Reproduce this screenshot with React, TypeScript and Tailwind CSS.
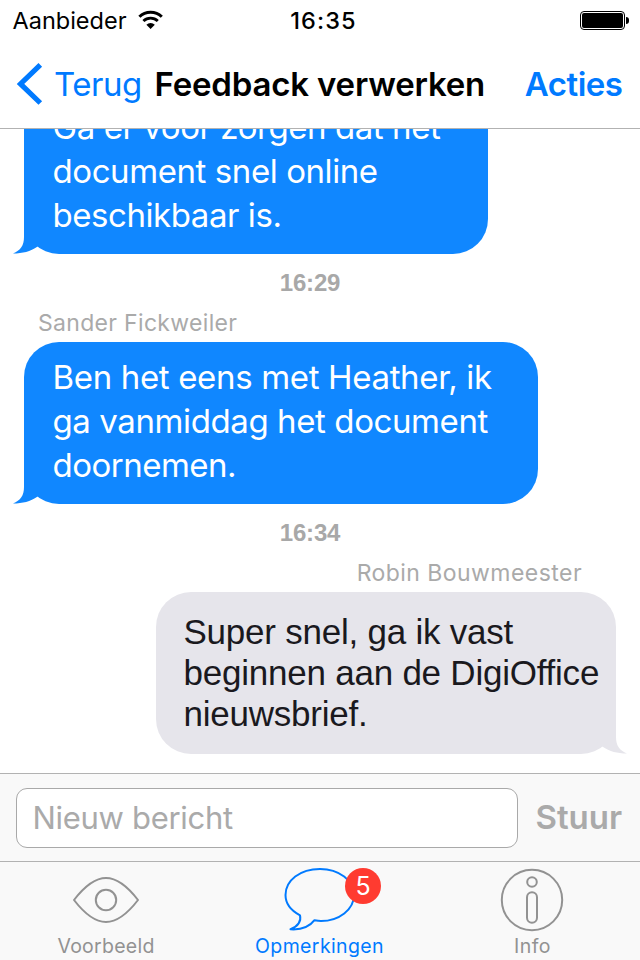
import React from "react";

function StatusBar() {
  return (
    <div className="grid h-10 grid-cols-[1fr_auto_1fr] items-center text-[23.5px] leading-[42px]">
      <div className="flex items-center pl-[12.5px]">
        <span>Aanbieder</span>
        <svg className="mb-[2px] ml-[11px]" width="26" height="20" viewBox="0 0 26 20" fill="none">
          <path d="M1.4 6.8A16 16 0 0 1 23.8 6.8" stroke="#000" strokeWidth="3" />
          <path d="M5.4 11A10.3 10.3 0 0 1 19.8 11" stroke="#000" strokeWidth="2.8" />
          <path d="M8.4 14.8A5.8 5.8 0 0 1 16.8 14.8L12.6 18.9Z" fill="#000" />
        </svg>
      </div>
      <span className="pl-[7px] font-medium tracking-[1.1px]">16:35</span>
      <div className="mb-[2px] flex items-center justify-end gap-px pr-[11px]">
        <div className="h-[19px] w-[45px] rounded-[4px] border border-black p-px">
          <div className="h-full w-full rounded-[2px] bg-black" />
        </div>
        <div className="h-[7px] w-[3px] rounded-r-full bg-black" />
      </div>
    </div>
  );
}

function NavBar() {
  return (
    <div className="flex h-[88px] items-center text-[33px] leading-[44px]">
      <svg className="ml-[15px] shrink-0" width="30" height="46" viewBox="0 0 30 46" fill="none">
        <path d="M25.3 3.8L5.5 22.9L25.3 42" stroke="#007aff" strokeWidth="5.2" />
      </svg>
      <span className="w-[100px] shrink-0 whitespace-nowrap pl-[9px] tracking-[-0.5px] text-[#007aff]">Terug</span>
      <span className="shrink-0 whitespace-nowrap pl-[9.5px] font-semibold tracking-[-0.18px]">Feedback verwerken</span>
      <span className="ml-auto pr-[17.5px] font-semibold tracking-[-0.5px] text-[#007aff]">Acties</span>
    </div>
  );
}

function Time({ children }: { children: React.ReactNode }) {
  return (
    <div className="h-[50px] shrink-0 pr-5 pt-2 text-center font-['Liberation_Sans',Arial,sans-serif] text-2xl leading-[42px] font-bold tracking-[-0.2px] text-[#a8a8a8]">
      {children}
    </div>
  );
}

function Tail({ className, color }: { className: string; color: string }) {
  return (
    <svg className={className} width="38" height="37" viewBox="0 0 38 37">
      <path d="M11 0V20C11 28.5 7.5 33.5 0 36.5C10 36.5 17 34.5 24.7 29.5L37 18V0Z" fill={color} />
    </svg>
  );
}

function Messages() {
  return (
    <div className="flex h-[644px] flex-col justify-end overflow-hidden bg-white pb-[19px]">
      <div className="relative ml-6 h-[162px] w-[464px] shrink-0 rounded-[35px] bg-[#1087ff] pt-[13px] pl-[28.5px] text-[33px] leading-[44px] whitespace-nowrap text-white">
        <Tail className="absolute bottom-0 -left-[11px]" color="#1087ff" />
        <div className="relative tracking-[-0.43px]">Ga er voor zorgen dat het</div>
        <div className="relative tracking-[-0.42px]">document snel online</div>
        <div className="relative tracking-[-0.44px]">beschikbaar is.</div>
      </div>
      <Time>16:29</Time>
      <div className="h-[38px] shrink-0 pl-[38px] text-[23px] leading-[38px] tracking-[0.32px] text-[#aaa]">
        Sander Fickweiler
      </div>
      <div className="relative ml-6 h-[162px] w-[514px] shrink-0 rounded-[35px] bg-[#1087ff] pt-[13px] pl-[28.5px] text-[33px] leading-[44px] whitespace-nowrap text-white">
        <Tail className="absolute bottom-0 -left-[11px]" color="#1087ff" />
        <div className="relative tracking-[-0.34px]">Ben het eens met Heather, ik</div>
        <div className="relative tracking-[-0.4px]">ga vanmiddag het document</div>
        <div className="relative tracking-[-0.5px]">doornemen.</div>
      </div>
      <Time>16:34</Time>
      <div className="h-[38px] shrink-0 pr-[58px] text-right text-[23px] leading-[38px] tracking-[0.45px] text-[#aaa]">
        Robin Bouwmeester
      </div>
      <div className="relative mr-6 h-[162px] w-[460px] shrink-0 self-end rounded-[35px] bg-[#e6e5eb] pt-[18.5px] pl-[27.5px] font-['Liberation_Sans',Arial,sans-serif] text-[35px] leading-[41.2px] tracking-[-0.23px] whitespace-nowrap text-[#1a191e]">
        <Tail className="absolute -right-[11px] bottom-0 -scale-x-100" color="#e6e5eb" />
        <div className="relative">Super snel, ga ik vast</div>
        <div className="relative">beginnen aan de DigiOffice</div>
        <div className="relative">nieuwsbrief.</div>
      </div>
    </div>
  );
}

function Composer() {
  return (
    <div className="flex h-[88px] items-start border-t border-[#b2b2b2] bg-[#f9f9f9] pt-[14px] pl-4">
      <div className="h-[60px] w-[502px] rounded-[11px] border border-[#a9a9a9] bg-white pl-[15.5px] text-[31px] leading-[58px] tracking-[-0.3px] text-[#aaa]">
        Nieuw bericht
      </div>
      <span className="pl-[17.5px] text-[33px] leading-[58px] font-semibold text-[#aaa]">Stuur</span>
    </div>
  );
}

function TabBar() {
  return (
    <div className="flex h-[99px] border-t border-[#b2b2b2] bg-[#f9f9f9] text-[19.5px] leading-6 text-[#929292]">
      <div className="flex w-[212px] flex-col items-center">
        <svg width="72" height="72" viewBox="0 0 72 72" fill="none" stroke="#929292" strokeWidth="2">
          <path d="M4 38C14 25 24 16 36 16S58 25 68 38C58 51 48 60 36 60S14 51 4 38Z" strokeLinejoin="round" />
          <circle cx="36" cy="38" r="10.2" />
        </svg>
        <span className="tracking-[0.26px]">Voorbeeld</span>
      </div>
      <div className="flex w-[214px] flex-col items-center text-[#007aff]">
        <div className="relative h-[72px]">
          <svg width="72" height="72" viewBox="0 0 72 72" fill="none" stroke="#007aff" strokeWidth="2">
            <path d="M17 53.3C7 48 2.5 41 2.5 33C2.5 18.5 17 7 37 7C56 7 71 18.5 71 33C71 47.5 56 59 38 59C35.5 59 33.5 58.6 31.5 58.2C26 65.5 18 68 7.5 67.3C15 64.5 18.5 59 17 53.3Z" strokeLinejoin="round" />
          </svg>
          <span className="absolute top-[6px] left-[62px] h-9 w-9 rounded-full bg-[#ff3b30] text-center text-[25px] leading-9 text-white">
            5
          </span>
        </div>
        <span className="pl-px tracking-[0.38px]">Opmerkingen</span>
      </div>
      <div className="flex w-[212px] flex-col items-center">
        <svg width="72" height="72" viewBox="0 0 72 72" fill="none" stroke="#929292" strokeWidth="2">
          <circle cx="36" cy="38" r="30.2" />
          <circle cx="36" cy="20" r="4.8" />
          <rect x="31" y="30.3" width="10" height="30.4" rx="5" />
        </svg>
        <span className="pl-px tracking-[0.5px]">Info</span>
      </div>
    </div>
  );
}

export default function App() {
  return (
    <div className="h-[960px] w-[640px] overflow-hidden bg-white font-[Inter,sans-serif] text-black">
      <div className="h-[129px] border-b border-[#b2b2b2]">
        <StatusBar />
        <NavBar />
      </div>
      <Messages />
      <Composer />
      <TabBar />
    </div>
  );
}
